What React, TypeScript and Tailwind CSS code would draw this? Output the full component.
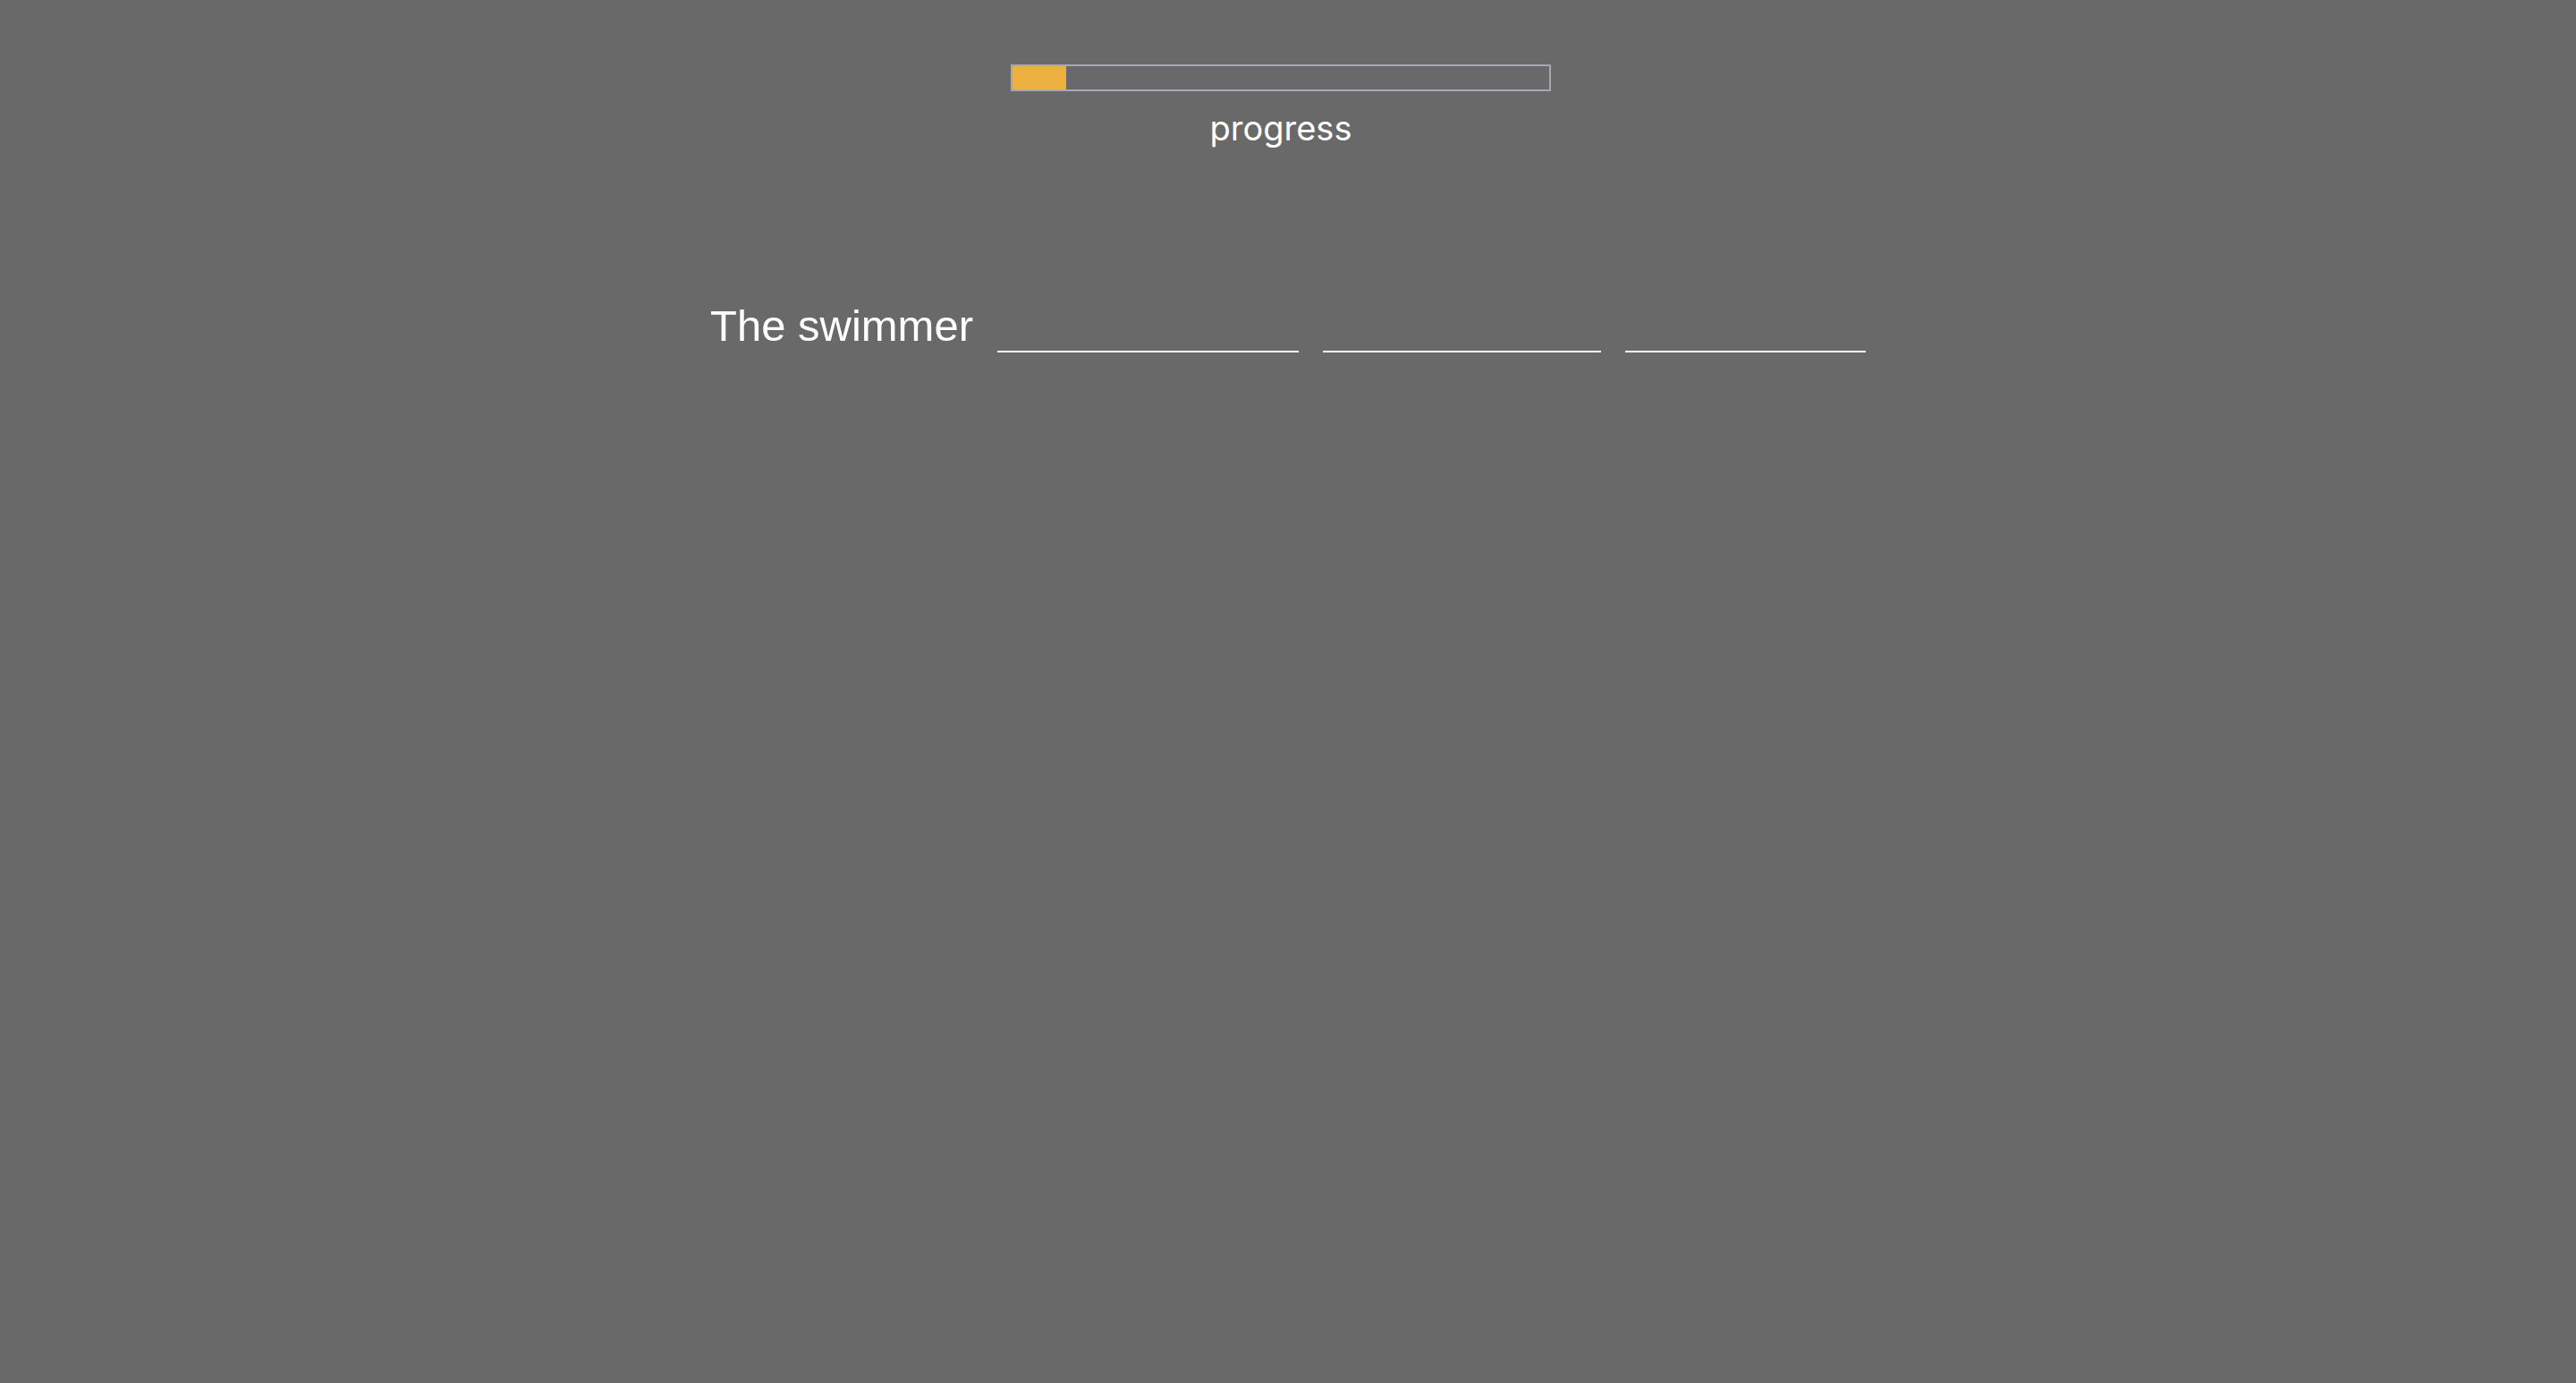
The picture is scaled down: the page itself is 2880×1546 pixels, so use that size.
import React from "react";

export default function App() {
  const blanks = [337, 311, 269];
  return (
    <div className="min-h-[1546px] w-full bg-[#696969] text-white">
      <div className="flex flex-col items-center pt-[72px] pr-[16px]">
        <div className="h-[30px] w-[604px] border-2 border-[#a4a7b4]">
          <div className="h-full bg-[#ebb040]" style={{ width: "10%" }} />
        </div>
        <div
          className="mt-[19px] text-[38px] leading-[44px]"
          style={{ fontFamily: "Inter, 'Noto Sans', sans-serif" }}
        >
          progress
        </div>
      </div>
      <div className="mt-[170px] flex items-end justify-center">
        <span
          className="text-[49px] leading-[59px] mr-[27px]"
          style={{ fontFamily: "'Liberation Sans', Arial, sans-serif" }}
        >
          The swimmer
        </span>
        <div className="flex items-end gap-[27px]">
          {blanks.map((w, i) => (
            <span key={i} className="block h-[40px] border-b-2 border-white" style={{ width: w }} />
          ))}
        </div>
      </div>
    </div>
  );
}
